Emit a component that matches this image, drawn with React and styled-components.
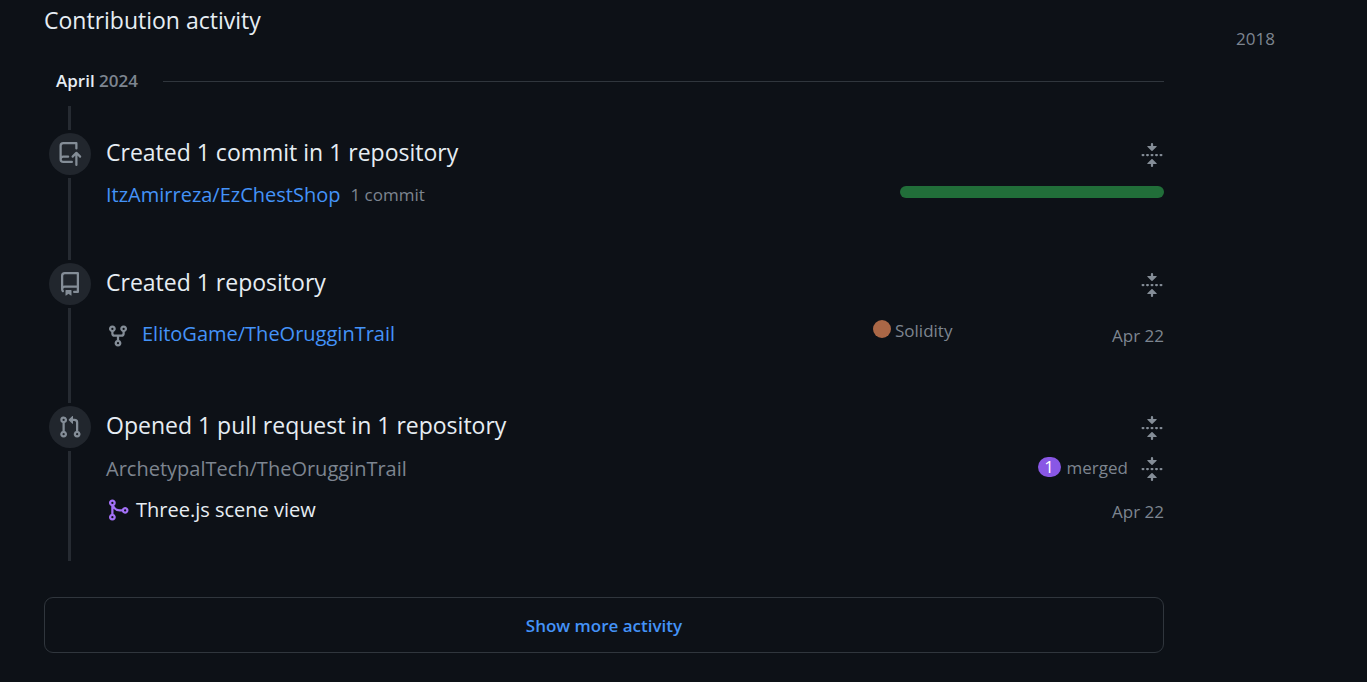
import React from "react";
import styled, { createGlobalStyle } from "styled-components";

const Global = createGlobalStyle`
  * { box-sizing: border-box; }
  body {
    margin: 0;
    background: #0d1117;
    color: #e6edf3;
    font-family: "Open Sans", "Noto Sans", sans-serif;
    font-size: 20px;
    line-height: 32px;
  }
  h2, h3, h4, p { margin: 0; font-weight: 400; }
  a { text-decoration: none; }
`;

const Page = styled.div`
  display: grid;
  grid-template-columns: minmax(0, 1fr) 131px;
  column-gap: 72px;
  padding: 0 0 29px 44px;
`;

const Main = styled.main`
  min-width: 0;
`;

const Years = styled.nav`
  padding-top: 22px;
`;

const YearLink = styled.a`
  color: #7d8590;
  font-size: 17px;
`;

const Heading = styled.h2`
  padding-top: 2px;
  font-size: 23px;
  line-height: 36px;
`;

const Month = styled.h3`
  display: flex;
  align-items: center;
  gap: 25px;
  margin: 27px 0 9px;
  padding-left: 12px;
  font-size: 17px;
  font-weight: 600;

  &::after {
    content: "";
    flex: 1;
    height: 1px;
    background: #30363d;
  }
`;

const MonthYear = styled.span`
  color: #7d8590;
`;

const Item = styled.section`
  display: flex;
  gap: 15px;
  padding-left: 5px;
`;

const Rail = styled.div`
  flex: none;
  display: flex;
  flex-direction: column;
  align-items: center;
  gap: 3px;
  width: 42px;
`;

const Line = styled.div`
  width: 3px;
  margin-right: 1px;
  background: #262b32;
  ${(p) => (p.$grow ? "flex: 1;" : "height: 24px;")}
`;

const Badge = styled.div`
  display: grid;
  place-items: center;
  width: 42px;
  height: 42px;
  border-radius: 50%;
  background: #21262d;
  color: #848d97;
`;

const Body = styled.div`
  flex: 1;
  min-width: 0;
  padding: 28px 0 ${(p) => p.$bottom}px;
`;

const TitleRow = styled.div`
  display: flex;
  align-items: center;
  justify-content: space-between;
`;

const Title = styled.h4`
  font-size: 23px;
  line-height: 36px;
`;

const FoldButton = styled.button`
  display: block;
  padding: ${(p) => p.$drop}px 0 0;
  border: 0;
  background: none;
  color: #848d97;
`;

const Row = styled.div`
  display: grid;
  grid-template-columns: minmax(0, 1fr) ${(p) => p.$side || "auto"};
  align-items: center;
  margin-top: ${(p) => p.$top}px;
  height: 32px;
`;

const Cell = styled.div`
  display: flex;
  align-items: center;
  gap: ${(p) => p.$gap}px;
`;

const RepoLink = styled.a`
  color: #4493f8;
`;

const PullRepo = styled.span`
  color: #7d8590;
`;

const PullLink = styled.a`
  color: #e6edf3;
`;

const CommitLink = styled.a`
  color: #7d8590;
  font-size: 17px;
`;

const DateText = styled.time`
  color: #7d8590;
  font-size: 17px;
  padding-top: 4px;
`;

const Bar = styled.div`
  height: 12px;
  margin-bottom: 6px;
  border-radius: 6px;
  background: #216e39;
`;

const Details = styled.div`
  display: flex;
  align-items: center;
  justify-content: space-between;
`;

const Language = styled.span`
  display: flex;
  align-items: center;
  gap: 4px;
  padding-bottom: 6px;
  color: #7d8590;
  font-size: 17px;
`;

const Dot = styled.span`
  width: 18px;
  height: 18px;
  margin-bottom: 4px;
  border-radius: 50%;
  background: #aa6746;
`;

const Count = styled.span`
  min-width: 23px;
  margin-bottom: 4px;
  border-radius: 10px;
  background: #8957e5;
  color: #ffffff;
  font-size: 17px;
  line-height: 20px;
  text-align: center;
`;

const Merged = styled.span`
  margin: 0 6px 2px 0;
  color: #7d8590;
  font-size: 17px;
`;

const MergeMark = styled.span`
  display: flex;
  color: #a371f7;
`;

const ForkMark = styled.span`
  display: flex;
  padding-top: 3px;
  color: #848d97;
`;

const More = styled.button`
  display: block;
  width: 100%;
  height: 56px;
  margin-top: 36px;
  border: 1px solid #30363d;
  border-radius: 9px;
  background: none;
  color: #4493f8;
  font-family: inherit;
  font-size: 17px;
  font-weight: 600;
`;

const paths = {
  push: "M1 2.5A2.5 2.5 0 0 1 3.5 0h8.75a.75.75 0 0 1 .75.75v3.5a.75.75 0 0 1-1.5 0V1.5h-8a1 1 0 0 0-1 1v6.708A2.493 2.493 0 0 1 3.5 9h3.25a.75.75 0 0 1 0 1.5H3.5a1 1 0 0 0 0 2h5.75a.75.75 0 0 1 0 1.5H3.5A2.5 2.5 0 0 1 1 11.5Zm13.23 7.79h-.001l-1.224-1.224v6.184a.75.75 0 0 1-1.5 0V9.066L10.28 10.29a.75.75 0 0 1-1.06-1.061l2.505-2.504a.75.75 0 0 1 1.06 0L15.29 9.23a.751.751 0 0 1-.018 1.042.751.751 0 0 1-1.042.018Z",
  repo: "M2 2.5A2.5 2.5 0 0 1 4.5 0h8.75a.75.75 0 0 1 .75.75v12.5a.75.75 0 0 1-.75.75h-2.5a.75.75 0 0 1 0-1.5h1.75v-2h-8a1 1 0 0 0-.714 1.7.75.75 0 1 1-1.072 1.05A2.495 2.495 0 0 1 2 11.5Zm10.5-1h-8a1 1 0 0 0-1 1v6.708A2.486 2.486 0 0 1 4.5 9h8ZM5 12.25a.25.25 0 0 1 .25-.25h3.5a.25.25 0 0 1 .25.25v3.25a.25.25 0 0 1-.4.2l-1.45-1.087a.249.249 0 0 0-.3 0L5.4 15.7a.25.25 0 0 1-.4-.2Z",
  fork: "M5 5.372v.878c0 .414.336.75.75.75h4.5a.75.75 0 0 0 .75-.75v-.878a2.25 2.25 0 1 1 1.5 0v.878a2.25 2.25 0 0 1-2.25 2.25h-1.5v2.128a2.251 2.251 0 1 1-1.5 0V8.5h-1.5A2.25 2.25 0 0 1 3.5 6.25v-.878a2.25 2.25 0 1 1 1.5 0ZM5 3.25a.75.75 0 1 0-1.5 0 .75.75 0 0 0 1.5 0Zm6.75.75a.75.75 0 1 0 0-1.5.75.75 0 0 0 0 1.5Zm-3 8.75a.75.75 0 1 0-1.5 0 .75.75 0 0 0 1.5 0Z",
  pull: "M1.5 3.25a2.25 2.25 0 1 1 3 2.122v5.256a2.251 2.251 0 1 1-1.5 0V5.372A2.25 2.25 0 0 1 1.5 3.25Zm5.677-.177L9.573.677A.25.25 0 0 1 10 .854V2.5h1A2.5 2.5 0 0 1 13.5 5v5.628a2.251 2.251 0 1 1-1.5 0V5a1 1 0 0 0-1-1h-1v1.646a.25.25 0 0 1-.427.177L7.177 3.427a.25.25 0 0 1 0-.354ZM3.75 2.5a.75.75 0 1 0 0 1.5.75.75 0 0 0 0-1.5Zm0 9.5a.75.75 0 1 0 0 1.5.75.75 0 0 0 0-1.5Zm8.25.75a.75.75 0 1 0 1.5 0 .75.75 0 0 0-1.5 0Z",
  merge: "M5.45 5.154A4.25 4.25 0 0 0 9.25 7.5h1.378a2.251 2.251 0 1 1 0 1.5H9.25A5.734 5.734 0 0 1 5 7.123v3.505a2.25 2.25 0 1 1-1.5 0V5.372a2.25 2.25 0 1 1 1.95-.218ZM4.25 13.5a.75.75 0 1 0 0-1.5.75.75 0 0 0 0 1.5Zm8.5-4.5a.75.75 0 1 0 0-1.5.75.75 0 0 0 0 1.5ZM5 3.25a.75.75 0 1 0-1.5 0 .75.75 0 0 0 1.5 0Z",
  fold: "M10.896 2H8.75V.75a.75.75 0 0 0-1.5 0V2H5.104a.25.25 0 0 0-.177.427l2.896 2.896a.25.25 0 0 0 .354 0l2.896-2.896A.25.25 0 0 0 10.896 2ZM8.75 15.25a.75.75 0 0 1-1.5 0V14H5.104a.25.25 0 0 1-.177-.427l2.896-2.896a.25.25 0 0 1 .354 0l2.896 2.896a.25.25 0 0 1-.177.427H8.75v1.25Zm-6.5-6.5a.75.75 0 0 0 0-1.5h-.5a.75.75 0 0 0 0 1.5h.5ZM6 8a.75.75 0 0 1-.75.75h-.5a.75.75 0 0 1 0-1.5h.5A.75.75 0 0 1 6 8Zm2.25.75a.75.75 0 0 0 0-1.5h-.5a.75.75 0 0 0 0 1.5h.5ZM12 8a.75.75 0 0 1-.75.75h-.5a.75.75 0 0 1 0-1.5h.5A.75.75 0 0 1 12 8Zm2.25.75a.75.75 0 0 0 0-1.5h-.5a.75.75 0 0 0 0 1.5h.5Z",
};

const Svg = styled.svg`
  display: block;
  width: 24px;
  height: 24px;
  fill: currentColor;
`;

function Icon({ name }) {
  return (
    <Svg viewBox="0 0 16 16" aria-hidden="true">
      <path d={paths[name]} />
    </Svg>
  );
}

function Fold({ drop = 0 }) {
  return (
    <FoldButton type="button" aria-label="Collapse" $drop={drop}>
      <Icon name="fold" />
    </FoldButton>
  );
}

function TimelineItem({ icon, title, bottom, children }) {
  return (
    <Item>
      <Rail>
        <Line />
        <Badge>
          <Icon name={icon} />
        </Badge>
        <Line $grow />
      </Rail>
      <Body $bottom={bottom}>
        <TitleRow>
          <Title>{title}</Title>
          <Fold drop={6} />
        </TitleRow>
        {children}
      </Body>
    </Item>
  );
}

export default function App() {
  return (
    <>
      <Global />
      <Page>
        <Main>
          <Heading>Contribution activity</Heading>
          <Month>
            <span>
              April <MonthYear>2024</MonthYear>
            </span>
          </Month>

          <TimelineItem icon="push" title="Created 1 commit in 1 repository" bottom={25}>
            <Row $top={9} $side="25%">
              <Cell $gap={10}>
                <RepoLink href="#repo">ItzAmirreza/EzChestShop</RepoLink>
                <CommitLink href="#commits">1 commit</CommitLink>
              </Cell>
              <Bar />
            </Row>
          </TimelineItem>

          <TimelineItem icon="repo" title="Created 1 repository" bottom={32}>
            <Row $top={15} $side="291px">
              <Cell $gap={12}>
                <ForkMark>
                  <Icon name="fork" />
                </ForkMark>
                <RepoLink href="#fork">ElitoGame/TheOrugginTrail</RepoLink>
              </Cell>
              <Details>
                <Language>
                  <Dot />
                  Solidity
                </Language>
                <DateText>Apr 22</DateText>
              </Details>
            </Row>
          </TimelineItem>

          <TimelineItem icon="pull" title="Opened 1 pull request in 1 repository" bottom={37}>
            <Row $top={9}>
              <PullRepo>ArchetypalTech/TheOrugginTrail</PullRepo>
              <Cell $gap={6}>
                <Count>1</Count>
                <Merged>merged</Merged>
                <Fold />
              </Cell>
            </Row>
            <Row $top={8}>
              <Cell $gap={6}>
                <MergeMark>
                  <Icon name="merge" />
                </MergeMark>
                <PullLink href="#pull">Three.js scene view</PullLink>
              </Cell>
              <DateText>Apr 22</DateText>
            </Row>
          </TimelineItem>

          <More type="button">Show more activity</More>
        </Main>
        <Years aria-label="Years">
          <YearLink href="#2018">2018</YearLink>
        </Years>
      </Page>
    </>
  );
}
